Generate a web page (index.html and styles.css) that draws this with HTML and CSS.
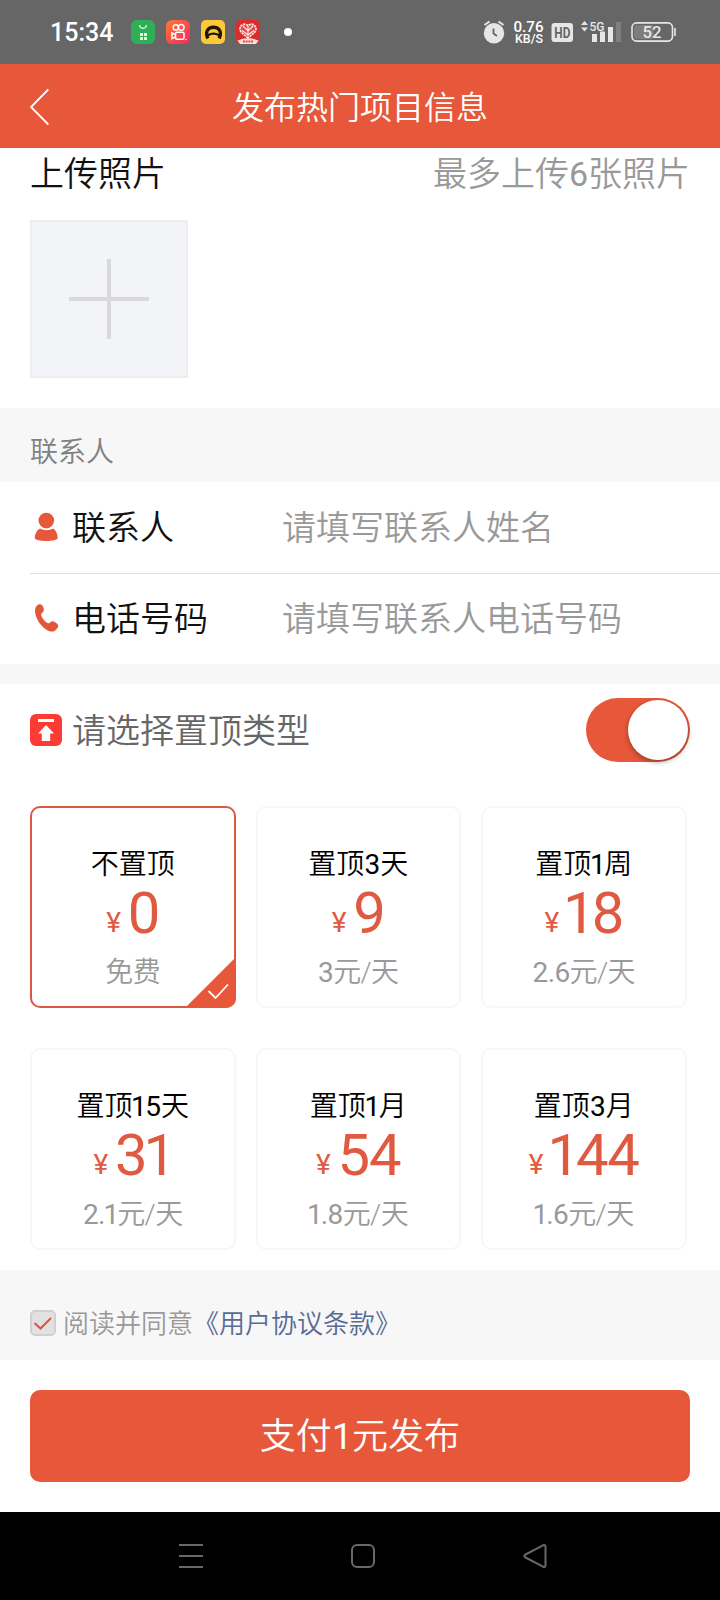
FILE: index.html
```html
<!DOCTYPE html>
<html lang="zh-CN">
<head>
<meta charset="utf-8">
<title>发布热门项目信息</title>
<link rel="stylesheet" href="styles.css">
</head>
<body>
<div class="status">
  <span class="time">15:34</span>
  <div class="apps">
    <svg width="24" height="24" viewBox="0 0 24 24"><rect width="24" height="24" rx="6" fill="#2fae55"/><path d="M8.500 5c.5 4.300 6.500 4.300 7 0" fill="none" stroke="#d9ffe0" stroke-width="1.300"/><path d="M9 13h3v3H9zM13 13h3v3h-3zM9 17h3v3H9zM13 17h3v3h-3z" fill="#d9ffe0"/></svg>
    <svg width="24" height="24" viewBox="0 0 24 24"><defs><linearGradient id="ks" x1="0" y1="0" x2="1" y2="1"><stop offset="0" stop-color="#ff7a32"/><stop offset="1" stop-color="#f6285f"/></linearGradient></defs><rect width="24" height="24" rx="6" fill="url(#ks)"/><g fill="none" stroke="#fff" stroke-width="1.500"><circle cx="9.800" cy="7.400" r="2.600"/><circle cx="15.200" cy="7.400" r="2.800"/><rect x="9.500" y="12.300" width="8.500" height="7" rx="1.500"/><path d="M9.500 14.500L6 13v5.500l3.500-1.500"/></g><circle cx="20" cy="19.500" r=".7" fill="#fff"/></svg>
    <svg width="24" height="24" viewBox="0 0 24 24"><rect width="24" height="24" rx="5" fill="#fdc93a"/><path d="M6.800 18.500C3.800 11.500 7 7.200 12.500 7.200S21.200 11.500 18.200 18.500" fill="none" stroke="#1d1708" stroke-width="3.400"/><path d="M7 15.300q5.500-3.300 11 0" fill="none" stroke="#1d1708" stroke-width="2.200"/></svg>
    <svg width="24" height="24" viewBox="0 0 24 24"><rect width="24" height="24" rx="5" fill="#dd2b2b"/><path d="M12 18L5.500 12.500C1.500 8 6.500 1.500 12 5.500c5.500-4 10.500 2.500 6.500 7z" fill="#e64a48" stroke="#ffe3df" stroke-width="1.800" stroke-dasharray="2.200 .8"/><path d="M7 6l5 5 5-5M6 10.500l6 4.500 6-4.500M12 6v10" fill="none" stroke="#ffe3df" stroke-width="1.200"/><path d="M1.500 20.500Q12 16 22.500 20.500L20 24H4z" fill="#ffdcd8"/><path d="M7 21.500h10" stroke="#c55" stroke-width="2" stroke-dasharray="2 .7"/></svg>
  </div>
  <i class="dot"></i>
  <svg class="sys" width="200" height="30" viewBox="480 17 200 30">
    <circle cx="494" cy="33.200" r="10.200" fill="#e6e6e6"/><path d="M484.500 25l5-3.500M503.500 25l-5-3.500" stroke="#e6e6e6" stroke-width="2"/><path d="M493.500 28.500v5l3.500 2.500" fill="none" stroke="#666" stroke-width="1.800"/>
    <text x="513.500" y="32" font-size="15.500" font-weight="500" fill="#fff" textLength="30" lengthAdjust="spacingAndGlyphs">0.76</text>
    <text x="515" y="43.400" font-size="12.500" font-weight="500" fill="#fff" textLength="28" lengthAdjust="spacingAndGlyphs">KB/S</text>
    <rect x="551.500" y="23" width="21.500" height="19" rx="3" fill="#e6e6e6"/><text x="554.300" y="37.700" font-size="15" font-weight="700" fill="#666" textLength="16" lengthAdjust="spacingAndGlyphs">HD</text>
    <path d="M581 25l3.500-4 3.500 4zM581 27.500h7l-3.500 4z" fill="#e6e6e6"/>
    <text x="589.500" y="30.500" font-size="13" font-weight="500" fill="#e6e6e6" textLength="15" lengthAdjust="spacingAndGlyphs">5G</text>
    <path d="M592 34h5v8h-5zM600 31.500h5V42h-5zM608 27h5v15h-5z" fill="#e6e6e6"/><path d="M616 22h5v20h-5z" fill="#808080"/>
    <rect x="632" y="22.900" width="40.500" height="18.200" rx="4.500" fill="none" stroke="#e6e6e6" stroke-width="1.600"/><rect x="634" y="25" width="20" height="14" rx="2.500" fill="#7d7d7d"/><path d="M675 28v8" stroke="#e6e6e6" stroke-width="1.600"/>
    <text x="642.500" y="37.700" font-size="16" font-weight="500" fill="#e6e6e6" textLength="19" lengthAdjust="spacingAndGlyphs">52</text>
  </svg>
</div>
<header class="bar">
  <svg class="back" width="22" height="40" viewBox="0 0 22 40"><path d="M19.300 2.500L2 20l17.300 17.500" fill="none" stroke="#fff" stroke-width="1.800"/></svg>
  <h1>发布热门项目信息</h1>
</header>
<section class="photos">
  <div class="photos-head"><span>上传照片</span><span class="hint">最多上传<span class="n">6</span>张照片</span></div>
  <div class="add"></div>
</section>
<div class="group-title">联系人</div>
<section class="form">
  <div class="field">
    <svg width="42" height="34" viewBox="30 511 42 34"><circle cx="46.300" cy="520.600" r="7.800" fill="#e75739"/><path d="M40 528.600c4 2.200 9 2.200 13 0 3 1.500 4.700 6 4.700 9.300 0 4-22.900 4-22.900 0 0-3.300 2-7.800 5.200-9.300z" fill="#e75739"/></svg>
    <label>联系人</label><span class="ph">请填写联系人姓名</span>
  </div>
  <div class="field">
    <svg width="42" height="34" viewBox="30 602 42 34"><path d="M37 605.500c1.500-1.300 4-1.800 5.200-.3 1.300 1.800 2 4 1.600 5.500-.5 1.700-2.600 2.200-2.600 4 0 2.600 4.800 8.300 7.200 8.500 1.800.2 2.300-2.200 4.300-1.900 2 .3 4.600 2.300 5.300 3.600 1 1.900-2 5.600-4.500 6.500-3.300 1-8.300-2-12-6-4-4.500-6.500-10.500-6.500-14.500 0-2.300.8-4.300 2-5.400z" fill="#e2573b"/></svg>
    <label>电话号码</label><span class="ph">请填写联系人电话号码</span>
  </div>
</section>
<section class="top">
  <div class="top-head">
    <svg width="32" height="32" viewBox="0 0 32 32"><rect width="32" height="32" rx="6" fill="#fb3b34"/><path d="M8 5h16v3H8zM16 11l8 8.500h-3.800V27h-8.400v-7.500H8z" fill="#fff"/></svg>
    <span>请选择置顶类型</span>
    <div class="switch"><i></i></div>
  </div>
  <div class="cards">
    <div class="card on"><b>不置顶</b><p><small>¥</small>0</p><em>免费</em>
      <svg class="tick" width="51" height="51" viewBox="0 0 51 51"><path d="M51 0v41a10 10 0 0 1-10 10H0z" fill="#e75739"/><path d="M23.500 34l7 7L43 27.500" fill="none" stroke="#fff" stroke-width="1.800"/></svg>
    </div>
    <div class="card"><b>置顶<span class="n">3</span>天</b><p><small>¥</small>9</p><em><span class="n">3</span>元/天</em></div>
    <div class="card"><b>置顶<span class="n one">1</span>周</b><p><small>¥</small><span class="one">1</span>8</p><em><span class="n">2.6</span>元/天</em></div>
    <div class="card"><b>置顶<span class="n one">1</span><span class="n">5</span>天</b><p><small>¥</small>3<span class="one">1</span></p><em><span class="n">2.</span><span class="n one">1</span>元/天</em></div>
    <div class="card"><b>置顶<span class="n one">1</span>月</b><p><small>¥</small>54</p><em><span class="n one">1</span><span class="n">.8</span>元/天</em></div>
    <div class="card"><b>置顶<span class="n">3</span>月</b><p><small>¥</small><span class="one">1</span>44</p><em><span class="n one">1</span><span class="n">.6</span>元/天</em></div>
  </div>
</section>
<div class="agree">
  <svg width="26" height="26" viewBox="0 0 26 26"><rect x="1" y="1" width="24" height="24" rx="4" fill="#e1e1e1" stroke="#d0d0d0" stroke-width="2"/><path d="M4.500 13l6 5.500L21 8" fill="none" stroke="#e2503a" stroke-width="2"/></svg>
  <span>阅读并同意</span><a>《用户协议条款》</a>
</div>
<div class="pay"><div class="btn">支付<span class="n">1</span>元发布</div></div>
<nav class="nav">
  <svg width="720" height="88" viewBox="0 1512 720 88" fill="none" stroke="#686868" stroke-width="2"><path d="M179 1545h24M179 1556h24M179 1567h24"/><rect x="352" y="1545" width="22" height="22" rx="5"/><path d="M525.500 1554.500L543 1545.300q2.500-1 2.500 1.500v18.400q0 2.500-2.500 1.500L525.500 1557.500q-2.500-1.500 0-3z" stroke-linejoin="round"/></svg>
</nav>
</body>
</html>
```
FILE: styles.css
```css
* { box-sizing: border-box; }
body {
  margin: 0;
  width: 720px;
  height: 1600px;
  background: #fff;
  font-family: Roboto, "Noto Sans CJK SC", sans-serif;
  font-weight: 350;
  color: #111;
}
svg { display: block; flex: none; }
.n { font-weight: 400; }
.status {
  height: 64px;
  background: #666;
  display: flex;
  align-items: center;
  padding-left: 50px;
}
.time { width: 81px; padding-top: 2px; font-size: 25px; font-weight: 500; color: #fff; line-height: 62px; }
.apps { display: flex; gap: 11px; }
.dot { width: 8px; height: 8px; border-radius: 4px; background: #fff; margin-left: 24px; }
.sys { margin-left: 188px; }
.bar {
  height: 84px;
  background: #e75739;
  display: flex;
  align-items: center;
  justify-content: center;
  position: relative;
}
.back { position: absolute; left: 29px; top: 23px; }
.bar h1 { margin: 0; padding-top: 4px; color: #fff; font-size: 32px; font-weight: 350; line-height: 80px; }
.photos { height: 260px; padding: 0 30px; font-size: 34px; }
.photos-head { display: flex; justify-content: space-between; height: 72px; line-height: 52px; }
.hint, .ph { color: #999; }
.add {
  width: 158px;
  height: 158px;
  border: 2px solid #ededee;
  background:
    linear-gradient(#d9d9d9, #d9d9d9) center / 4px 80px no-repeat,
    linear-gradient(#d9d9d9, #d9d9d9) center / 80px 4px no-repeat,
    #f3f4f8;
}
.group-title {
  height: 74px;
  padding: 8px 0 0 30px;
  background: #f7f7f7;
  color: #808080;
  font-size: 28px;
  line-height: 74px;
}
.form { padding-left: 30px; border-bottom: 20px solid #f7f7f7; }
.field { height: 91px; display: flex; align-items: center; font-size: 34px; line-height: 90px; }
.field + .field { border-top: 1px solid #dedede; }
.field label { width: 210px; }
.top { height: 586px; padding: 0 30px; }
.top-head { height: 122px; padding-bottom: 30px; display: flex; align-items: center; font-size: 34px; color: #666; }
.top-head span { margin-left: 10px; padding-bottom: 3px; }
.switch { width: 104px; height: 64px; margin-left: auto; padding: 2px; border-radius: 32px; background: #e75739; }
.switch i { display: block; width: 60px; height: 60px; margin-left: 40px; border-radius: 50%; background: #fff; box-shadow: 0 2px 5px rgba(0, 0, 0, .35); }
.cards { display: grid; grid-template-columns: repeat(3, 205.500px); gap: 40px 20px; }
.card {
  position: relative;
  height: 202px;
  border: 2px solid #f7f7f7;
  border-radius: 10px;
  padding-top: 37px;
  text-align: center;
  font-size: 28px;
}
.card.on { border-color: #d9593f; }
.card b { display: block; font-weight: 350; color: #000; line-height: 40px; }
.card p { margin: 0; height: 68px; font-size: 58px; font-weight: 400; line-height: 57px; letter-spacing: -.020em; color: #df5a41; }
.card small { position: relative; top: -1px; font-size: 28px; margin-right: 8px; }
.card em { display: block; font-style: normal; line-height: 40px; letter-spacing: -.6px; color: #999; }
.one { margin: 0 -.050em; }
.tick { position: absolute; right: -2px; bottom: -2px; }
.agree {
  height: 90px;
  padding: 16px 0 0 30px;
  background: #f7f7f7;
  display: flex;
  align-items: center;
  font-size: 26px;
  color: #999;
}
.agree span { margin-left: 7px; }
.agree span, .agree a { padding-bottom: 3px; }
.agree a { color: #576b95; }
.pay { height: 152px; padding: 30px; }
.btn { height: 92px; padding-top: 1px; border-radius: 10px; background: #e75739; color: #fff; font-size: 36px; line-height: 92px; text-align: center; }
.nav { height: 88px; background: #000; }
```
